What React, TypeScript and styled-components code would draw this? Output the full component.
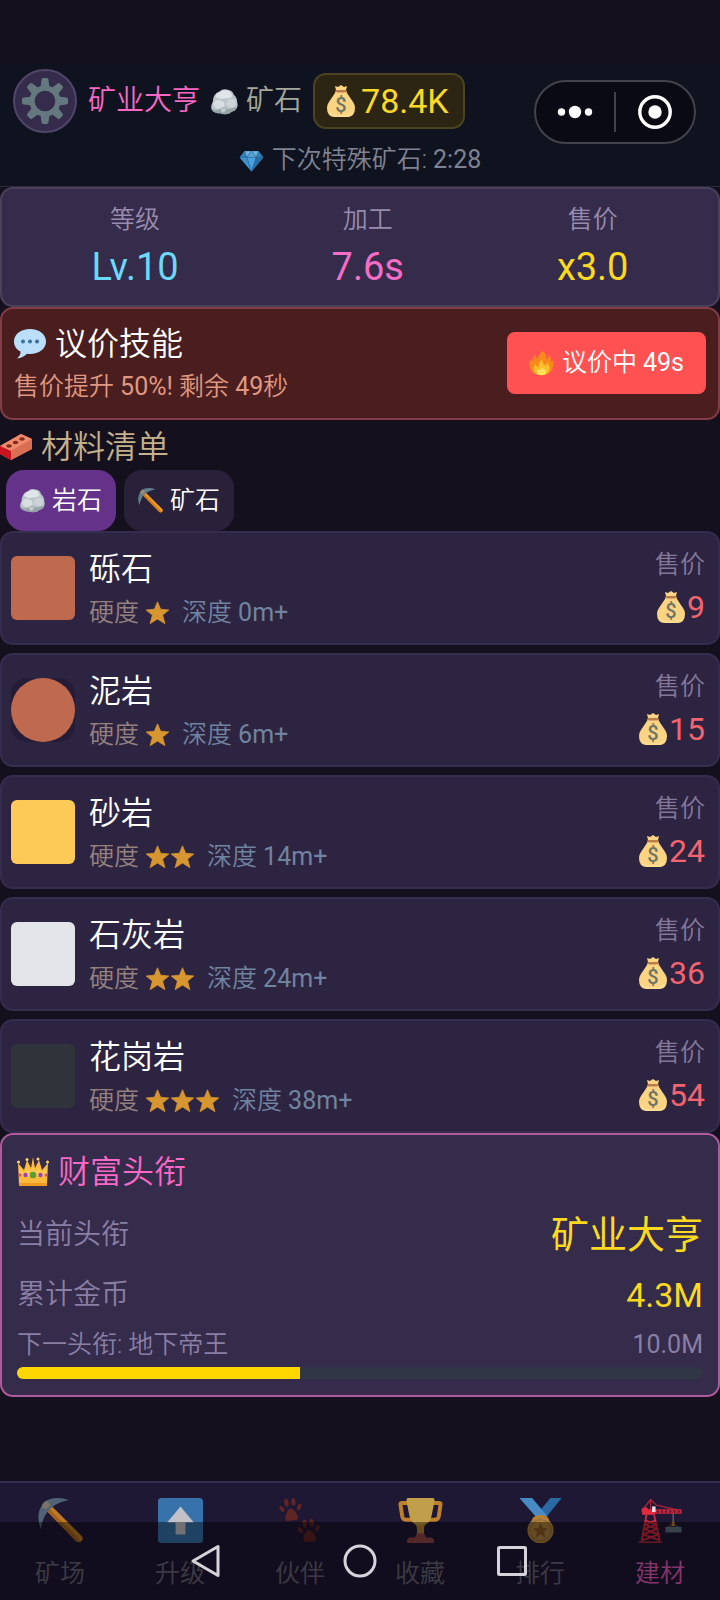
import React from 'react';
import styled, { createGlobalStyle } from 'styled-components';

const Global = createGlobalStyle`
  * { box-sizing: border-box; }
  html, body { margin: 0; padding: 0; background: #15101d; }
  body {
    font-family: Roboto, "Noto Sans CJK SC", sans-serif;
    font-weight: 350;
    color: #ffffff;
  }
  button { font: inherit; color: inherit; border: 0; margin: 0; padding: 0; background: none; cursor: pointer; }
  h1, h2, h3, p, ul, dl, dt, dd { margin: 0; padding: 0; font-weight: inherit; }
  ul { list-style: none; }
  svg { display: block; flex: none; }
`;

/* ---------- icons ---------- */

type IconProps = { size: number };

const Svg = ({ size, children }: { size: number; children: React.ReactNode }) => (
  <svg width={size} height={size} viewBox="0 0 32 32" aria-hidden="true">{children}</svg>
);

const GearIcon = ({ size }: IconProps) => (
  <Svg size={size}>
    <g fill="#65777f">
      {[0, 45, 90, 135, 180, 225, 270, 315].map((a) => (
        <path key={a} d="M13.6 1.2Q13.6 0 14.8 0H17.2Q18.4 0 18.4 1.2L19.2 7H12.8Z" transform={`rotate(${a} 16 16)`} />
      ))}
    </g>
    <circle cx="16" cy="16" r="9" fill="none" stroke="#65777f" strokeWidth="3.600" />
  </Svg>
);

const RockIcon = ({ size }: IconProps) => (
  <Svg size={size}>
    <path d="M4 9Q6 5 10 4Q14 0 20 2Q26 3 27 8Q31 11 31 17Q33 23 28 27Q24 28 22 30Q16 32 11 30Q4 30 1 26Q-1 21 2 17Q2 12 4 9Z" fill="#bcc5c9" />
    <path d="M5 10Q7 5 12 4Q17 1 22 4Q25 6 25 10Q21 13 16 12Q10 14 5 10Z" fill="#dfe5e8" />
    <path d="M3 17Q7 12 12 15Q17 16 16 21Q12 25 7 24Q2 22 3 17Z" fill="#d8dfe2" />
    <path d="M19 15Q24 11 28 14Q31 18 28 22Q23 24 19 21Q17 18 19 15Z" fill="#cdd5d9" />
    <path d="M1 24Q5 28 11 25Q15 22 18 24Q24 26 30 22Q30 26 27 27Q24 28 22 30Q16 32 11 30Q4 30 1 26Z" fill="#98a3a9" />
    <path d="M12 25Q15 23 18 25Q18 28 14 29Q11 28 12 25Z" fill="#c3ccd0" />
  </Svg>
);

const MoneyBagIcon = ({ size }: IconProps) => (
  <svg width={size - 4} height={size} viewBox="0 0 28 32" aria-hidden="true">
    <path d="M8 1L11 2L14 0L17 2L20 1L19 5L20 8L24 14Q28 19 28 23Q28 32 20 32H8Q0 32 0 23Q0 19 4 14L8 8L9 5Z" fill="#fbd483" />
    <path d="M9 5H19L20 7Q14 8 8 7Z" fill="#bc7d48" />
    <path d="M2 25Q5 31 13 30Q22 31 26 26Q25 32 19 32H8Q3 31 2 25Z" fill="#fddc94" />
    <text x="14" y="27" textAnchor="middle" fontFamily="Roboto, sans-serif" fontSize="20" fontWeight="500" fill="#6b7568">$</text>
  </svg>
);

const GemIcon = ({ size }: IconProps) => (
  <Svg size={size}>
    <path d="M7 4H25L31 12L16 30L1 12Z" fill="#4a9fdc" />
    <path d="M7 4L10 12H1ZM25 4L22 12H31Z" fill="#2f7fb8" />
    <path d="M7 4H16L10 12ZM25 4H16L22 12Z" fill="#6db2dc" />
    <path d="M16 4L22 12H10Z" fill="#5aa5d4" />
    <path d="M1 12H10L16 30Z" fill="#3d93d0" />
    <path d="M31 12H22L16 30Z" fill="#276fa6" />
    <path d="M1 12H31M10 12L16 30L22 12L16 4L10 12L7 4M22 12L25 4" fill="none" stroke="#1f5f92" strokeWidth="0.8" />
  </Svg>
);

const SpeechIcon = ({ size }: IconProps) => (
  <Svg size={size}>
    <path d="M16 1C25 1 32 6 32 13.500C32 21 25 26 16 26C15 26 14 26 13 25.800Q9 30 3 30.500Q7 27 6.500 23.500C2.500 21.500 0 18 0 13.500C0 6 7 1 16 1Z" fill="#bbdefb" />
    <g fill="#3a6f9f"><circle cx="9" cy="13.500" r="2" /><circle cx="16" cy="13.500" r="2" /><circle cx="23" cy="13.500" r="2" /></g>
  </Svg>
);

const FireIcon = ({ size }: IconProps) => (
  <Svg size={size}>
    <path d="M17 0Q23 4 22 11Q25 9 25 5Q29 9 28 14Q31 13 31 11Q33 31 16 31Q-1 31 1 13Q2 11 3 9Q3 12 5 14Q4 8 8 4Q8 8 11 11Q12 4 17 0Z" fill="#f58a1c" />
    <path d="M17 11Q17 16 21 19Q23 17 23 14Q28 20 26 25Q23 31 16 31Q8 31 6 25Q5 20 9 17Q9 20 12 21Q12 15 17 11Z" fill="#fbbd2c" />
    <path d="M16 21Q23 24 22 28Q20 31 16 31Q11 31 10 27Q10 25 12 24Q14 25 16 21Z" fill="#fde05c" />
  </Svg>
);

const BrickIcon = ({ size }: IconProps) => (
  <Svg size={size}>
    <path d="M0 15L21 3L32 8V18L11 29L0 23Z" fill="#e8704f" />
    <path d="M0 15L21 3L32 8L11 20Z" fill="#f08a6a" />
    <path d="M0 15L11 20V29L0 23Z" fill="#c8141f" />
    <path d="M11 20L32 8V18L11 29Z" fill="#d96e55" />
    <g fill="#7d2a22"><ellipse cx="9" cy="15" rx="2.800" ry="1.800" /><ellipse cx="15.500" cy="11.500" rx="2.800" ry="1.800" /><ellipse cx="22" cy="8" rx="2.800" ry="1.800" /></g>
  </Svg>
);

const PickIcon = ({ size }: IconProps) => (
  <Svg size={size}>
    <path d="M5 8L9 5L31 27Q32.500 29 31 30.500Q29 32 27 30.500Z" fill="#f59a22" />
    <path d="M5 8L7 6.500L29 29Q30 31 29 31.500Q28 31.500 27 30.500Z" fill="#d07c14" />
    <path d="M4 3Q12 -2 22 1.500Q14 3 9.500 7Q3.500 12 2 22Q-2 12 3 5Z" fill="#607d8b" />
    <path d="M3 4.500L6 2L9 5L6 8L3 7Z" fill="#9c8f78" />
  </Svg>
);

const CrownIcon = ({ size }: IconProps) => (
  <Svg size={size}>
    <path d="M2 29L1 7L7 14L10 4L14 12L16 1L18 12L22 4L25 14L31 7L30 29Z" fill="#fdb93c" />
    <path d="M2 12L7 16L10 12L14 15L16 10L18 15L22 12L25 16L30 12L30 20H2Z" fill="#ffc94f" />
    <path d="M2 27H30V30H2Z" fill="#f29a1f" />
    <g fill="#ffd76b"><circle cx="1.500" cy="6" r="1.500" /><circle cx="10" cy="3.500" r="1.500" /><circle cx="21" cy="3" r="1.500" /><circle cx="30.500" cy="6" r="1.500" /></g>
    <circle cx="16" cy="19" r="3.300" fill="#5c9e31" />
    <g fill="#9b45b5"><circle cx="8.500" cy="19" r="2.200" /><circle cx="23.500" cy="19" r="2.200" /></g>
    <g fill="#dc4b6c"><circle cx="3" cy="19" r="1.500" /><circle cx="29" cy="19" r="1.500" /></g>
  </Svg>
);

const StarIcon = ({ size }: IconProps) => (
  <Svg size={size}>
    <path d="M16 1L20 10.500L30.500 11.500L22.500 18L25.500 29L16 23L6.500 29L9.500 18L1.500 11.500L12 10.500Z" fill="#d7962f" stroke="#d7962f" strokeLinejoin="round" />
  </Svg>
);

const UpIcon = ({ size }: IconProps) => (
  <Svg size={size}>
    <rect width="32" height="32" rx="2.500" fill="#4190d2" />
    <path d="M16 6L25.500 17.500H19.500V26H12.500V17.500H6.500Z" fill="#fafafa" />
  </Svg>
);

const Paw = ({ x, y }: { x: number; y: number }) => (
  <g transform={`translate(${x} ${y}) rotate(-6 8 8)`} fill="#75281f">
    <ellipse cx="1.800" cy="7" rx="1.400" ry="2.400" transform="rotate(-30 2 7)" />
    <ellipse cx="5.500" cy="3" rx="1.600" ry="2.800" />
    <ellipse cx="10.500" cy="3" rx="1.600" ry="2.800" />
    <ellipse cx="14.200" cy="7" rx="1.400" ry="2.400" transform="rotate(30 14 7)" />
    <path d="M8 7.500Q10.500 8 12 12Q13.500 16 11 16H5Q2.500 16 4 12Q5.500 8 8 7.500Z" />
  </g>
);

const PawsIcon = ({ size }: IconProps) => (
  <Svg size={size}><Paw x={1} y={0} /><Paw x={14} y={15} /></Svg>
);

const TrophyIcon = ({ size }: IconProps) => (
  <Svg size={size}>
    <path d="M8 3.500H2.500Q1.500 3.500 1.800 5L3 13Q3.500 15.500 6 15.500H10M24 3.500H29.500Q30.500 3.500 30.200 5L29 13Q28.500 15.500 26 15.500H22" fill="none" stroke="#f5a32a" strokeWidth="2.800" />
    <path d="M7 0H25Q26 0 26 2L24 12Q23 18 18.500 19V26H13.500V19Q9 18 8 12L6 2Q6 0 7 0Z" fill="#f8cb50" />
    <path d="M12 18Q16 20.500 20 18L18.500 21V26H13.500V21Z" fill="#e8a52c" />
    <path d="M13.500 25H18.500L20 28H24Q26 29 25.500 32H6.500Q6 29 8 28H12Z" fill="#b4594b" />
  </Svg>
);

const MedalIcon = ({ size }: IconProps) => (
  <Svg size={size}>
    <path d="M23 0H31L19 15L14 11Z" fill="#2f84c8" />
    <path d="M1 0H10L21 13L15 16Z" fill="#55b0f5" />
    <path d="M10 15Q12 12 16 12Q20 12 22 15L21 18H11Z" fill="#f5a32a" />
    <circle cx="16" cy="23" r="9.300" fill="#dfa443" />
    <circle cx="16" cy="23" r="7.500" fill="none" stroke="#c08a35" strokeWidth="0.800" />
    <path d="M16 17.500L17.600 21.300L21.500 21.600L18.500 24.200L19.500 28.200L16 26L12.500 28.200L13.500 24.200L10.500 21.600L14.400 21.300Z" fill="#b0701f" />
  </Svg>
);

const CraneIcon = ({ size }: IconProps) => (
  <Svg size={size}>
    <path d="M9 1L3 9M9 1L13 5L30 9M9 1V8" fill="none" stroke="#c0283c" strokeWidth="0.800" />
    <path d="M6 12L2.500 31M11.500 12L15.500 31M5.500 16L13 19L4.500 22L14.500 26L3.500 30M12 16L5 19L13.500 22L4 26L15 30" fill="none" stroke="#d8283c" strokeWidth="1.300" />
    <rect x="3" y="8" width="9" height="4" fill="#e0293f" />
    <circle cx="5" cy="9" r="2.500" fill="#e0293f" />
    <rect x="12" y="8" width="19" height="3.200" fill="#c8233a" />
    <path d="M14 8.800V10.500M17 8.800V10.500M20 8.800V10.500M23 8.800V10.500M26 8.800V10.500M29 8.800V10.500" stroke="#4a1a34" strokeWidth="1.200" />
    <rect x="10" y="6" width="2.500" height="4" fill="#e2e2e8" />
    <path d="M25 11V17" stroke="#90767c" strokeWidth="0.700" />
    <path d="M24 17H26V20H24Z" fill="#d8862c" />
    <path d="M25 18L21 21M25 18L29 21" stroke="#81604c" strokeWidth="0.700" />
    <rect x="19.500" y="20.500" width="11.500" height="4" fill="#5d737b" />
    <path d="M0.500 31.500H17" stroke="#b02a3a" strokeWidth="1.200" />
  </Svg>
);

/* ---------- layout ---------- */

const Page = styled.div`
  min-height: 100vh;
  padding: 64px 0 128px;
`;

/* Latin digits read lighter than the Chinese glyphs, so they get a full weight. */
const Num = styled.span`
  font-weight: 400;
`;

const Header = styled.header`
  position: relative;
  display: flex;
  flex-direction: column;
  gap: 9px;
  padding: 5px 13px 8px;
  background: #0f1320;
  border-bottom: 1px solid #2e2b3c;
`;

const Row = styled.div<{ $gap?: number }>`
  display: flex;
  align-items: center;
  gap: ${(p) => p.$gap ?? 8}px;
`;

const GearButton = styled.button`
  display: flex;
  align-items: center;
  justify-content: center;
  width: 64px;
  height: 64px;
  border-radius: 50%;
  border: 2px solid #50466a;
  background: #352b4b;
`;

const Title = styled.h1`
  font-size: 28px;
  line-height: 40px;
  color: #f868c4;
`;

const OreLabel = styled.span`
  font-size: 28px;
  line-height: 40px;
  color: #a4a79c;
`;

const CoinBadge = styled.div`
  display: flex;
  align-items: center;
  gap: 6px;
  height: 56px;
  padding: 0 14px 0 12px;
  border: 2px solid #4c4420;
  border-radius: 13px;
  background: #2c2513;
  font-size: 34px;
  font-weight: 400;
  line-height: 40px;
  color: #fbd926;
`;

const NextOre = styled.p`
  display: flex;
  align-items: center;
  justify-content: center;
  gap: 8px;
  font-size: 25px;
  line-height: 36px;
  color: #7f8290;
`;

const Capsule = styled.div`
  position: absolute;
  top: 16px;
  right: 24px;
  display: flex;
  align-items: center;
  width: 162px;
  height: 64px;
  border: 2px solid #42424c;
  border-radius: 32px;
  background: #090a13;
`;

const CapsuleButton = styled.button`
  flex: 1;
  display: flex;
  align-items: center;
  justify-content: center;
  height: 40px;
  & + & { border-left: 2px solid #42424c; }
`;

const Stats = styled.dl`
  display: flex;
  justify-content: space-around;
  padding: 15px 13px 13px;
  border: 2px solid #4b415a;
  border-radius: 13px;
  background: #352b4b;
`;

const Stat = styled.div`
  display: flex;
  flex-direction: column;
  align-items: center;
  gap: 6px;
`;

const StatLabel = styled.dt`
  font-size: 25px;
  line-height: 32px;
  color: #988cae;
`;

const StatValue = styled.dd<{ $color: string }>`
  font-size: 38px;
  font-weight: 400;
  line-height: 50px;
  color: ${(p) => p.$color};
`;

const Bargain = styled.section`
  display: flex;
  align-items: center;
  justify-content: space-between;
  padding: 15px 12px 16px;
  border: 2px solid #843c46;
  border-radius: 13px;
  background: #4a1d1f;
`;

const Stack = styled.div`
  display: flex;
  flex-direction: column;
  align-items: flex-start;
  gap: 8px;
`;

const Heading = styled.h2<{ $color?: string }>`
  display: flex;
  align-items: center;
  gap: 9px;
  font-size: 32px;
  line-height: 40px;
  color: ${(p) => p.$color ?? '#ffffff'};
`;

const BargainNote = styled.p`
  font-size: 25px;
  line-height: 30px;
  color: #e09880;
`;

const BargainButton = styled.button`
  display: flex;
  align-items: center;
  gap: 8px;
  height: 62px;
  padding: 0 22px;
  border-radius: 8px;
  background: #ff5151;
  font-size: 25px;
  line-height: 32px;
`;

const Materials = styled.section`
  padding-top: 7px;
`;

const Tabs = styled.div`
  display: flex;
  gap: 8px;
  padding: 3px 6px 0;
`;

const Tab = styled.button<{ $active?: boolean }>`
  display: flex;
  align-items: center;
  gap: 7px;
  height: 61px;
  padding: 0 14px;
  border-radius: 18px;
  background: ${(p) => (p.$active ? '#653289' : '#292039')};
  font-size: 25px;
  line-height: 32px;
`;

const List = styled.ul`
  display: flex;
  flex-direction: column;
  gap: 8px;
`;

const Item = styled.li`
  display: flex;
  align-items: center;
  gap: 14px;
  padding: 14px 13px 14px 9px;
  border: 2px solid #352d4e;
  border-radius: 13px;
  background: #2d2442;
`;

const SwatchFrame = styled.div`
  width: 64px;
  height: 64px;
  border-radius: 16px;
  background: #251c38;
`;

const Swatch = styled.div<{ $color: string; $round?: boolean }>`
  width: 100%;
  height: 100%;
  border-radius: ${(p) => (p.$round ? '50%' : '6px')};
  background: ${(p) => p.$color};
`;

const Details = styled(Stack)`
  flex: 1;
  padding-top: 2px;
`;

const PriceBlock = styled(Stack)`
  align-self: flex-start;
  align-items: flex-end;
  gap: 6px;
  padding-top: 2px;
`;

const ItemName = styled.h3`
  font-size: 32px;
  line-height: 40px;
`;

const Meta = styled.div`
  display: flex;
  align-items: center;
  gap: 12px;
  font-size: 25px;
  line-height: 32px;
`;

const Hardness = styled.span`
  display: flex;
  align-items: center;
  gap: 6px;
  color: #94817f;
`;

const Stars = styled.span`
  display: flex;
`;

const Depth = styled.span`
  color: #70839f;
`;

const PriceLabel = styled.span`
  font-size: 25px;
  line-height: 32px;
  color: #84789a;
`;

const Price = styled.span`
  display: flex;
  align-items: center;
  gap: 2px;
  font-size: 32px;
  font-weight: 400;
  line-height: 40px;
  color: #f4636e;
`;

const Wealth = styled.section`
  display: flex;
  flex-direction: column;
  padding: 17px 15px 16px;
  border: 2px solid #b05a9e;
  border-radius: 13px;
  background: #352b4b;
`;

const WealthRows = styled.div`
  display: flex;
  flex-direction: column;
  gap: 16px;
  padding: 21px 0 12px;
`;

const WealthRow = styled.div<{ $small?: boolean }>`
  display: flex;
  align-items: center;
  justify-content: space-between;
  font-size: ${(p) => (p.$small ? 25 : 28)}px;
  line-height: ${(p) => (p.$small ? 32 : 44)}px;
  color: #8a7fa4;
`;

const Gold = styled.span<{ $size: number }>`
  font-size: ${(p) => p.$size}px;
  font-weight: 400;
  color: #fbd91e;
`;

const Progress = styled.div`
  height: 12px;
  margin-top: 6px;
  border-radius: 6px;
  overflow: hidden;
  background: #303645;
`;

const Fill = styled.div`
  height: 100%;
  background: #ffd700;
`;

const TabBar = styled.nav`
  position: fixed;
  left: 0;
  right: 0;
  bottom: 0;
  display: flex;
  height: 119px;
  padding-top: 15px;
  border-top: 2px solid #352d52;
  background: #1e1834;
`;

const NavItem = styled.button<{ $active?: boolean }>`
  flex: 1;
  display: flex;
  flex-direction: column;
  align-items: center;
  gap: 15px;
  font-size: 25px;
  line-height: 32px;
  color: ${(p) => (p.$active ? '#e05cb4' : '#6a6474')};
  svg { opacity: ${(p) => (p.$active ? 1 : 0.75)}; }
`;

const SystemBar = styled.div`
  position: fixed;
  left: 0;
  right: 0;
  bottom: 0;
  display: flex;
  align-items: center;
  justify-content: center;
  gap: 112px;
  height: 78px;
  background: rgba(0, 0, 0, 0.42);
`;

const SystemButton = styled.button`
  width: 40px;
  height: 40px;
`;

const materials = [
  { name: '砾石', stars: 1, depth: '0m+', price: '9', color: '#bf694e' },
  { name: '泥岩', stars: 1, depth: '6m+', price: '15', color: '#bf694e', round: true },
  { name: '砂岩', stars: 2, depth: '14m+', price: '24', color: '#fdca57' },
  { name: '石灰岩', stars: 2, depth: '24m+', price: '36', color: '#e3e5e8' },
  { name: '花岗岩', stars: 3, depth: '38m+', price: '54', color: '#2f343b' },
];

const navItems = [
  { label: '矿场', Icon: PickIcon },
  { label: '升级', Icon: UpIcon },
  { label: '伙伴', Icon: PawsIcon },
  { label: '收藏', Icon: TrophyIcon },
  { label: '排行', Icon: MedalIcon },
  { label: '建材', Icon: CraneIcon, active: true },
];

export default function App() {
  const progress = 41.3;
  return (
    <>
      <Global />
      <Page>
        <Header>
          <Row $gap={11}>
            <GearButton aria-label="设置"><GearIcon size={46} /></GearButton>
            <Title>矿业大亨</Title>
            <Row><RockIcon size={27} /><OreLabel>矿石</OreLabel></Row>
            <CoinBadge><MoneyBagIcon size={32} />78.4K</CoinBadge>
          </Row>
          <NextOre><GemIcon size={25} /><span>下次特殊矿石: <Num>2:28</Num></span></NextOre>
          <Capsule>
            <CapsuleButton aria-label="更多">
              <svg width="36" height="14" viewBox="0 0 36 14" fill="#ffffff">
                <circle cx="4.500" cy="7" r="3.700" /><circle cx="18" cy="7" r="6.200" /><circle cx="31.500" cy="7" r="3.700" />
              </svg>
            </CapsuleButton>
            <CapsuleButton aria-label="关闭">
              <svg width="34" height="34" viewBox="0 0 34 34">
                <circle cx="17" cy="17" r="15.200" fill="none" stroke="#ffffff" strokeWidth="3.400" />
                <circle cx="17" cy="17" r="6.700" fill="#ffffff" />
              </svg>
            </CapsuleButton>
          </Capsule>
        </Header>

        <Stats>
          <Stat><StatLabel>等级</StatLabel><StatValue $color="#6cd8fa">Lv.10</StatValue></Stat>
          <Stat><StatLabel>加工</StatLabel><StatValue $color="#f56cc4">7.6s</StatValue></Stat>
          <Stat><StatLabel>售价</StatLabel><StatValue $color="#fbd91e">x3.0</StatValue></Stat>
        </Stats>

        <Bargain>
          <Stack>
            <Heading><SpeechIcon size={32} />议价技能</Heading>
            <BargainNote>售价提升 <Num>50%!</Num> 剩余 <Num>49</Num>秒</BargainNote>
          </Stack>
          <BargainButton><FireIcon size={25} /><span>议价中 <Num>49s</Num></span></BargainButton>
        </Bargain>

        <Materials>
          <Heading $color="#c5b08c"><BrickIcon size={32} />材料清单</Heading>
          <Tabs role="tablist">
            <Tab role="tab" aria-selected="true" $active><RockIcon size={25} />岩石</Tab>
            <Tab role="tab" aria-selected="false"><PickIcon size={25} />矿石</Tab>
          </Tabs>
          <List>
            {materials.map((m) => (
              <Item key={m.name}>
                <SwatchFrame><Swatch $color={m.color} $round={m.round} /></SwatchFrame>
                <Details>
                  <ItemName>{m.name}</ItemName>
                  <Meta>
                    <Hardness>
                      硬度
                      <Stars>{Array.from({ length: m.stars }, (_, i) => <StarIcon key={i} size={25} />)}</Stars>
                    </Hardness>
                    <Depth>深度 <Num>{m.depth}</Num></Depth>
                  </Meta>
                </Details>
                <PriceBlock>
                  <PriceLabel>售价</PriceLabel>
                  <Price><MoneyBagIcon size={32} />{m.price}</Price>
                </PriceBlock>
              </Item>
            ))}
          </List>
        </Materials>

        <Wealth>
          <Heading $color="#f868c4"><CrownIcon size={32} />财富头衔</Heading>
          <WealthRows>
            <WealthRow><span>当前头衔</span><Gold $size={38}>矿业大亨</Gold></WealthRow>
            <WealthRow><span>累计金币</span><Gold $size={34}>4.3M</Gold></WealthRow>
          </WealthRows>
          <WealthRow $small><span>下一头衔: 地下帝王</span><Num>10.0M</Num></WealthRow>
          <Progress role="progressbar" aria-label="下一头衔" aria-valuenow={progress}>
            <Fill style={{ width: `${progress}%` }} />
          </Progress>
        </Wealth>
      </Page>

      <TabBar>
        {navItems.map(({ label, Icon, active }) => (
          <NavItem key={label} $active={active}><Icon size={45} />{label}</NavItem>
        ))}
      </TabBar>

      <SystemBar>
        <SystemButton aria-label="返回">
          <svg width="40" height="40" viewBox="0 0 40 40" fill="none" stroke="#d6d4da" strokeWidth="3" strokeLinejoin="round">
            <path d="M30 5.500V34.500L5 20Z" />
          </svg>
        </SystemButton>
        <SystemButton aria-label="主页">
          <svg width="40" height="40" viewBox="0 0 40 40" fill="none" stroke="#d6d4da" strokeWidth="3">
            <circle cx="20" cy="20" r="15" />
          </svg>
        </SystemButton>
        <SystemButton aria-label="最近任务">
          <svg width="40" height="40" viewBox="0 0 40 40" fill="none" stroke="#d6d4da" strokeWidth="3">
            <rect x="6.500" y="6.500" width="27" height="27" rx="1" />
          </svg>
        </SystemButton>
      </SystemBar>
    </>
  );
}
